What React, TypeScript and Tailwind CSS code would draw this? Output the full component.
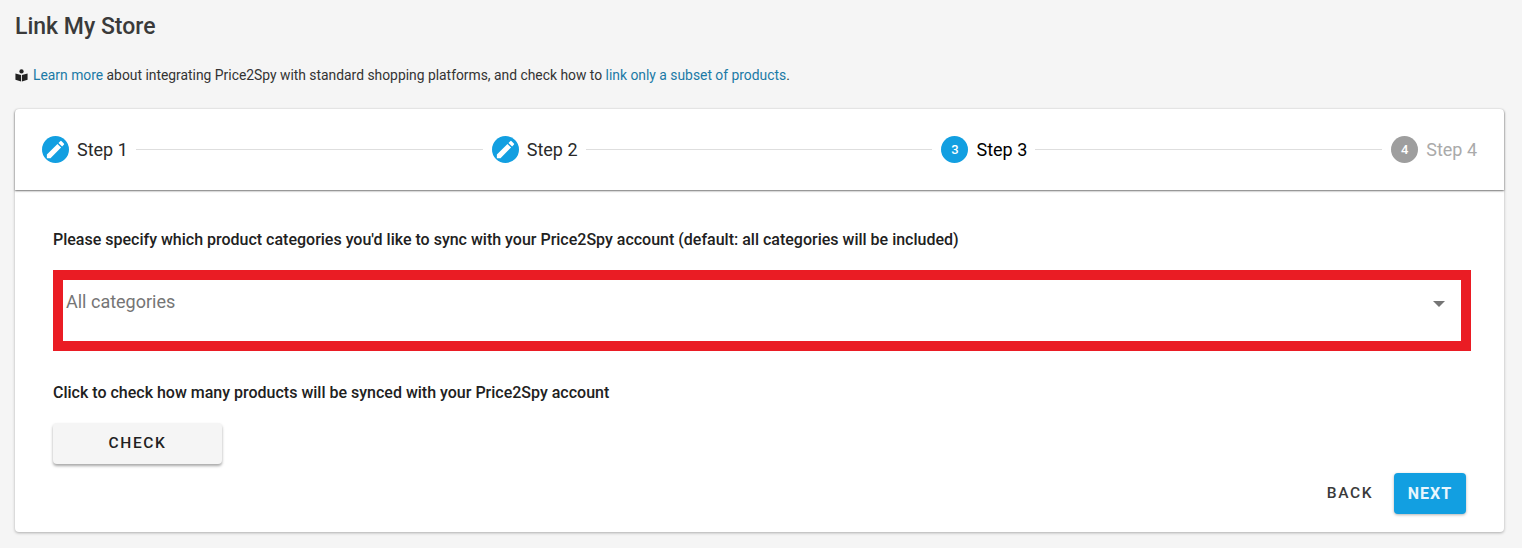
const font = { fontFamily: "Roboto, sans-serif" };

function PencilBadge() {
  return (
    <span className="flex h-[27px] w-[27px] shrink-0 items-center justify-center rounded-full bg-[#129fe1]">
      <svg viewBox="0 0 24 24" className="h-[23px] w-[23px]" fill="#fff">
        <path d="M3 17.25V21h3.75L17.81 9.94l-3.75-3.75L3 17.25zM20.71 7.04a1 1 0 0 0 0-1.41l-2.34-2.34a1 1 0 0 0-1.41 0l-1.83 1.83 3.75 3.75 1.83-1.83z" />
      </svg>
    </span>
  );
}

function NumberBadge({ n, active }: { n: number; active?: boolean }) {
  return (
    <span
      className={`flex h-[27px] w-[27px] shrink-0 items-center justify-center rounded-full text-[13px] font-medium text-white ${
        active ? "bg-[#129fe1]" : "bg-[#9e9e9e]"
      }`}
    >
      {n}
    </span>
  );
}

function Line() {
  return <div className="mr-[9px] ml-2 h-px flex-1 bg-[#dedede]" />;
}

export default function App() {
  return (
    <div className="h-[548px] overflow-hidden bg-[#f5f5f5] px-[15px] text-[#212121]" style={font}>
      <h1 className="pt-[13px] text-[23px] leading-[28px] font-medium text-[#3a3a3a]">Link My Store</h1>

      <p className="mt-[25px] flex h-[18px] items-center text-[13.87px] leading-[18px] text-[#333]">
        <svg viewBox="0 0 12 12" className="mr-[5px] h-[13px] w-[13px]" fill="#222">
          <circle cx="6" cy="2.2" r="2" />
          <path d="M0.4 4.2 L5.6 5.6 V11.6 L0.4 10 Z M11.6 4.2 L6.4 5.6 V11.6 L11.6 10 Z" />
        </svg>
        <a className="text-[#1b7aa6]">Learn more</a>
        <span className="whitespace-pre"> about integrating Price2Spy with standard shopping platforms, and check how to </span>
        <a className="text-[#1b7aa6]">link only a subset of products</a>.
      </p>

      <div className="mt-[25px] h-[423px] w-[1489px] rounded-[4px] bg-white shadow-[0_1px_3px_rgba(0,0,0,0.3)]">
        <div className="flex h-[81px] items-center rounded-t-[4px] px-[27px] shadow-[0_1px_2px_rgba(0,0,0,0.55)]">
          <PencilBadge />
          <span className="ml-2 text-[18px] text-[#2a2a2a]">Step 1</span>
          <Line />
          <PencilBadge />
          <span className="ml-2 text-[18px] text-[#2a2a2a]">Step 2</span>
          <Line />
          <NumberBadge n={3} active />
          <span className="ml-2 text-[18px] text-black">Step 3</span>
          <Line />
          <NumberBadge n={4} />
          <span className="ml-2 text-[18px] text-[#aaa]">Step 4</span>
        </div>

        <div className="px-[38px] pt-[41px]">
          <p className="text-[16px] leading-[18px] font-medium text-[#212121]">
            Please specify which product categories you'd like to sync with your Price2Spy account (default: all categories will be included)
          </p>

          <div className="mt-[21px] flex h-[81px] w-[1418px] items-start justify-between border-[10px] border-[#ea1c24] bg-white pl-[3px]">
            <span className="mt-[10px] text-[18px] leading-[24px] text-[#757575]">All categories</span>
            <span className="mt-[21px] mr-[16px] h-0 w-0 border-x-[6px] border-t-[6px] border-x-transparent border-t-[#757575]" />
          </div>

          <p className="mt-[33px] text-[16px] leading-[18px] font-medium text-[#212121]">
            Click to check how many products will be synced with your Price2Spy account
          </p>

          <button className="mt-[21px] block h-[41px] w-[169px] rounded-[4px] bg-[#f5f5f5] pt-px text-[15.5px] font-medium tracking-[1.6px] text-[#212121] shadow-[0_2px_3px_rgba(0,0,0,0.35)]">
            CHECK
          </button>

          <div className="mt-[9px] flex justify-end">
            <button className="mr-[4px] h-[41px] w-[80px] text-[15.5px] font-medium tracking-[1.6px] text-[#3a3a3a]">BACK</button>
            <button className="h-[41px] w-[72px] rounded-[4px] bg-[#129fe1] text-[16px] font-bold tracking-[1px] text-[#e8f6fd] shadow-[0_1px_3px_rgba(0,0,0,0.3)]">
              NEXT
            </button>
          </div>
        </div>
      </div>
    </div>
  );
}
